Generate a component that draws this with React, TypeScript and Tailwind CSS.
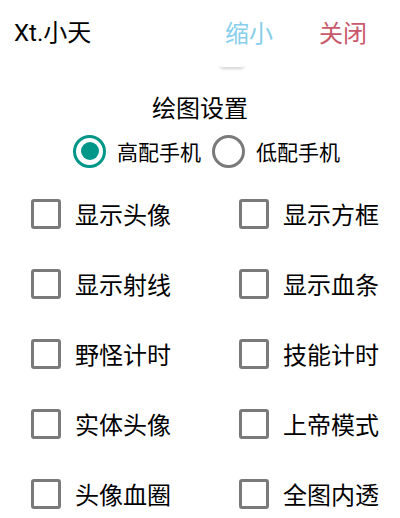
import React from 'react';

const cjk = '"Noto Sans CJK SC", "Noto Sans", sans-serif';

const options = [
  ['显示头像', '显示方框'],
  ['显示射线', '显示血条'],
  ['野怪计时', '技能计时'],
  ['实体头像', '上帝模式'],
  ['头像血圈', '全图内透'],
];

function Radio({ checked, label }: { checked: boolean; label: string }) {
  return (
    <div className="flex items-center gap-[11px]">
      <div
        className={
          checked
            ? 'flex h-[33px] w-[33px] items-center justify-center rounded-full border-[3px] border-[#009688]'
            : 'flex h-[33px] w-[33px] items-center justify-center rounded-full border-[3px] border-[#7a7a7a]'
        }
      >
        {checked && <div className="h-[18px] w-[18px] rounded-full bg-[#009688]" />}
      </div>
      <span className="text-[21px] leading-[28px] text-black">{label}</span>
    </div>
  );
}

function Check({ label }: { label: string }) {
  return (
    <div className="flex items-center gap-[14px]">
      <div className="h-[30px] w-[30px] rounded-[3px] border-[3px] border-[#7a7a7a]" />
      <span className="text-[24px] leading-[30px] text-black">{label}</span>
    </div>
  );
}

export default function App() {
  return (
    <div className="h-[518px] w-[400px] overflow-hidden bg-white" style={{ fontFamily: cjk }}>
      <header className="flex h-[64px] items-center pl-[14px] pr-[33px]">
        <span className="text-[24px] leading-[30px] text-black">
          <span style={{ fontFamily: 'Roboto, sans-serif' }}>Xt.</span>小天
        </span>
        <div className="flex-1" />
        <span className="text-[24px] leading-[30px] text-[#87cfec]">缩小</span>
        <span className="ml-[46px] text-[24px] leading-[30px] text-[#c9586a]">关闭</span>
      </header>

      <div className="h-[8px]">
        <div className="ml-[220px] h-[3px] w-[24px] rounded-b-full shadow-[0_2px_3px_rgba(0,0,0,0.18)]" />
      </div>

      <h2 className="mt-[20px] text-center text-[24px] leading-[30px] text-black">绘图设置</h2>

      <div className="mt-[11px] flex h-[36px] items-center gap-[11px] pl-[73px]">
        <Radio checked label="高配手机" />
        <Radio checked={false} label="低配手机" />
      </div>

      <div className="mt-[10px] grid grid-cols-[208px_1fr] pl-[31px]">
        {options.map(([a, b]) => (
          <React.Fragment key={a}>
            <div className="flex h-[70px] items-center">
              <Check label={a} />
            </div>
            <div className="flex h-[70px] items-center">
              <Check label={b} />
            </div>
          </React.Fragment>
        ))}
      </div>
    </div>
  );
}
